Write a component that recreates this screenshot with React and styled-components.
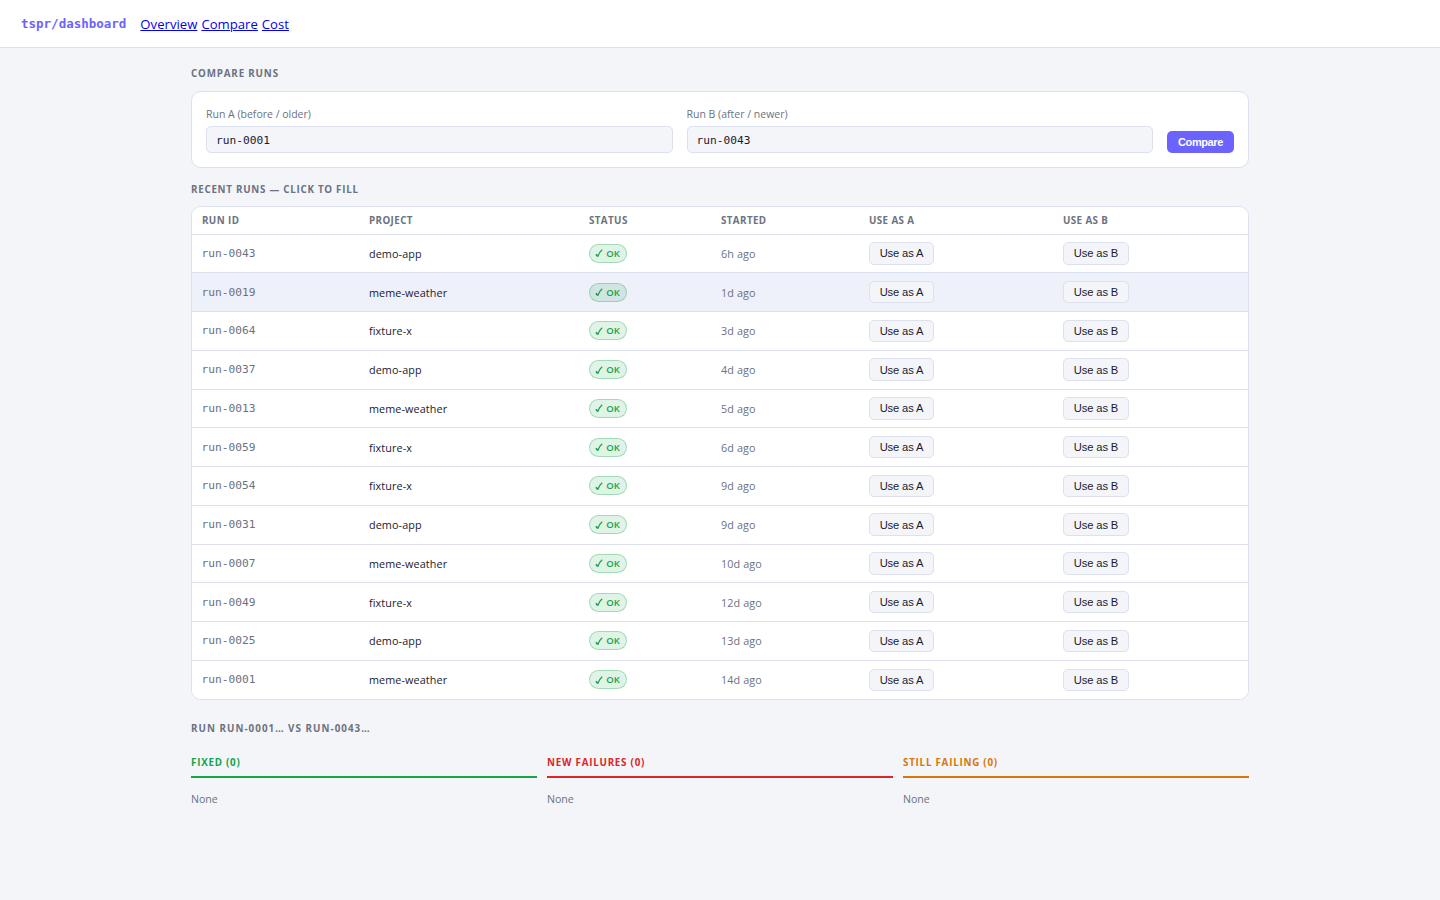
import React, { useState } from "react";
import styled, { createGlobalStyle } from "styled-components";

const GlobalStyle = createGlobalStyle`
  * { box-sizing: border-box; }
  body {
    margin: 0;
    min-height: 100vh;
    background: #f3f5f9;
    color: #1a1a2e;
    font-family: "Open Sans", "Noto Sans", sans-serif;
    font-size: 13px;
  }
`;

const mono = `"DejaVu Sans Mono", "Liberation Mono", monospace`;

const Header = styled.header`
  display: flex;
  align-items: center;
  gap: 14px;
  height: 48px;
  padding: 0 21px;
  background: #fff;
  border-bottom: 1px solid #dde0ee;
`;

const Brand = styled.span`
  font: 700 12.5px/18px ${mono};
  color: #6c63ff;
`;

const Nav = styled.nav`
  display: flex;
  gap: 4px;
  line-height: 20px;
  padding-top: 1px;
`;

const NavLink = styled.a`
  color: #0000ee;
  text-decoration: underline;
  font-size: 13.1px;
  letter-spacing: 0.03px;
`;

const Main = styled.main`
  width: 1058px;
  margin: 0 auto;
  padding-top: 17px;
`;

const SectionTitle = styled.h2`
  margin: 0;
  height: ${(p) => p.$height}px;
  padding-top: ${(p) => p.$top || 0}px;
  font-size: 9.8px;
  font-weight: 700;
  line-height: 17px;
  letter-spacing: ${(p) => p.$track}px;
  text-transform: uppercase;
  color: #6b7280;
`;

const Card = styled.section`
  display: flex;
  align-items: flex-end;
  gap: 14px;
  height: 77px;
  padding: 14px;
  background: #fff;
  border: 1px solid #dde0ee;
  border-radius: 10px;
`;

const Field = styled.label`
  flex: 1;
  display: flex;
  flex-direction: column;
  gap: 4px;
  font-size: 10.5px;
  line-height: 16px;
  color: #6b7280;
`;

const Input = styled.input`
  width: 100%;
  height: 27px;
  padding: 1px 9px 0;
  border: 1px solid #dde0ee;
  border-radius: 5px;
  outline: none;
  background: #f3f5f9;
  color: #1a1a2e;
  font: 11.2px ${mono};
`;

const CompareButton = styled.button`
  width: 67px;
  height: 22px;
  padding: 0;
  border: 0;
  border-radius: 5px;
  background: #6c63ff;
  color: #fff;
  font: 600 11px "Liberation Sans", sans-serif;
  letter-spacing: -0.4px;
`;

const Table = styled.div`
  background: #fff;
  border: 1px solid #dde0ee;
  border-radius: 10px;
  overflow: hidden;
`;

const Row = styled.div`
  display: grid;
  grid-template-columns: 167px 220px 132px 148px 194px 1fr;
  align-items: center;
  height: 38.75px;
  border-bottom: 1px solid #dde0ee;
  background: ${(p) => (p.$active ? "#eef0fa" : "#fff")};
  &:last-child { border-bottom: 0; height: 37.9px; }
`;

const HeadRow = styled(Row)`
  height: 27.6px;
`;

const HeadCell = styled.div`
  padding: 1px 0 0 10px;
  font-size: 9.8px;
  font-weight: 700;
  line-height: 16px;
  letter-spacing: 0.4px;
  text-transform: uppercase;
  color: #6b7280;
`;

const Cell = styled.div`
  padding-left: 10px;
`;

const RunId = styled(Cell)`
  padding: 0.6px 0 0 9.6px;
  font: 11.2px/16px ${mono};
  color: #6b7280;
`;

const Project = styled(Cell)`
  padding-top: 1px;
  font-size: 10.8px;
  line-height: 16px;
  letter-spacing: 0.1px;
`;

const Started = styled(Project)`
  color: #6b7280;
`;

const Badge = styled.span`
  display: flex;
  align-items: center;
  justify-content: center;
  gap: 3px;
  width: 38px;
  height: 19px;
  padding: 1px 1px 0 0;
  border: 1px solid rgba(22, 163, 74, 0.3);
  border-radius: 10px;
  background: ${(p) => (p.$active ? "#d0e5e1" : "#dff3e6")};
  color: #16a34a;
  font-size: 9.5px;
  font-weight: 600;
  line-height: 16px;
`;

const Check = styled.svg`
  width: 8px;
  height: 9px;
  fill: none;
  stroke: currentColor;
`;

const FillButton = styled.button`
  display: block;
  width: ${(p) => p.$width}px;
  height: 22.5px;
  padding: 0;
  border: 1px solid #dde0ee;
  border-radius: 5px;
  background: #f3f5f9;
  color: #1a1a2e;
  font: 11.2px "Liberation Sans", sans-serif;
  letter-spacing: -0.14px;
`;

const Results = styled.section`
  display: grid;
  grid-template-columns: repeat(3, 1fr);
  gap: 10px;
`;

const ResultTitle = styled.h3`
  margin: 0;
  height: 24px;
  border-bottom: 2px solid ${(p) => p.$color};
  color: ${(p) => p.$color};
  font-size: 9.8px;
  font-weight: 700;
  line-height: 17px;
  letter-spacing: 0.76px;
  text-transform: uppercase;
`;

const Empty = styled.p`
  margin: 13px 0 0;
  font-size: 10.6px;
  line-height: 16px;
  color: #6b7280;
`;

const runs = [
  ["run-0043", "demo-app", "6h ago"],
  ["run-0019", "meme-weather", "1d ago"],
  ["run-0064", "fixture-x", "3d ago"],
  ["run-0037", "demo-app", "4d ago"],
  ["run-0013", "meme-weather", "5d ago"],
  ["run-0059", "fixture-x", "6d ago"],
  ["run-0054", "fixture-x", "9d ago"],
  ["run-0031", "demo-app", "9d ago"],
  ["run-0007", "meme-weather", "10d ago"],
  ["run-0049", "fixture-x", "12d ago"],
  ["run-0025", "demo-app", "13d ago"],
  ["run-0001", "meme-weather", "14d ago"],
];

const columns = ["Run ID", "Project", "Status", "Started", "Use as A", "Use as B"];

const results = [
  ["Fixed (0)", "#16a34a"],
  ["New failures (0)", "#dc2626"],
  ["Still failing (0)", "#d97706"],
];

export default function App() {
  const [runA, setRunA] = useState("run-0001");
  const [runB, setRunB] = useState("run-0043");
  return (
    <>
      <GlobalStyle />
      <Header>
        <Brand>tspr/dashboard</Brand>
        <Nav>
          <NavLink href="#overview">Overview</NavLink>
          <NavLink href="#compare">Compare</NavLink>
          <NavLink href="#cost">Cost</NavLink>
        </Nav>
      </Header>
      <Main>
        <SectionTitle $height={26} $track={0.83}>Compare runs</SectionTitle>
        <Card>
          <Field>
            Run A (before / older)
            <Input value={runA} onChange={(e) => setRunA(e.target.value)} />
          </Field>
          <Field>
            Run B (after / newer)
            <Input value={runB} onChange={(e) => setRunB(e.target.value)} />
          </Field>
          <CompareButton>Compare</CompareButton>
        </Card>
        <SectionTitle $top={13} $height={38} $track={0.73}>Recent runs — click to fill</SectionTitle>
        <Table>
          <HeadRow>
            {columns.map((name) => <HeadCell key={name}>{name}</HeadCell>)}
          </HeadRow>
          {runs.map(([id, project, started], i) => (
            <Row key={id} $active={i === 1}>
              <RunId>{id}</RunId>
              <Project>{project}</Project>
              <Cell>
                <Badge $active={i === 1}>
                  <Check viewBox="0 0 8 9">
                    <path d="M1 5.3 2.7 7.4" strokeWidth="1.7" />
                    <path d="M2.7 7.8C3.6 5 5 2.6 7.2 0.8" strokeWidth="1.2" />
                  </Check>
                  OK
                </Badge>
              </Cell>
              <Started>{started}</Started>
              <Cell><FillButton $width={65} onClick={() => setRunA(id)}>Use as A</FillButton></Cell>
              <Cell><FillButton $width={66} onClick={() => setRunB(id)}>Use as B</FillButton></Cell>
            </Row>
          ))}
        </Table>
        <SectionTitle $top={20} $height={54} $track={1.03}>Run run-0001… vs run-0043…</SectionTitle>
        <Results>
          {results.map(([title, color]) => (
            <div key={title}>
              <ResultTitle $color={color}>{title}</ResultTitle>
              <Empty>None</Empty>
            </div>
          ))}
        </Results>
      </Main>
    </>
  );
}
